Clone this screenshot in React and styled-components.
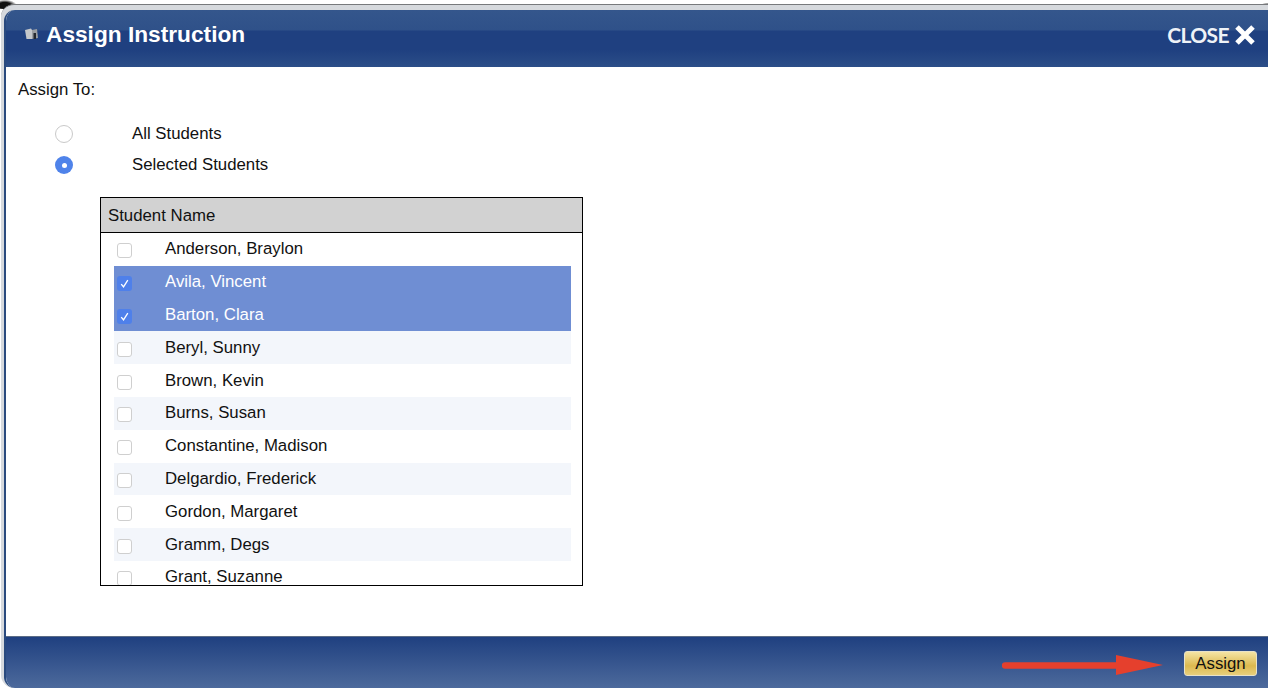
import React from "react";
import styled, { createGlobalStyle } from 'styled-components';

const students = [
  { name: 'Anderson, Braylon' },
  { name: 'Avila, Vincent', checked: true },
  { name: 'Barton, Clara', checked: true },
  { name: 'Beryl, Sunny' },
  { name: 'Brown, Kevin' },
  { name: 'Burns, Susan' },
  { name: 'Constantine, Madison' },
  { name: 'Delgardio, Frederick' },
  { name: 'Gordon, Margaret' },
  { name: 'Gramm, Degs' },
  { name: 'Grant, Suzanne' },
];

function App() {
  return (
    <Page>
      <GlobalStyle />
      <Frame>
        <Dialog>
          <Header>
            <Title>
              <svg width="13" height="12" viewBox="0 0 13 12">
                <path d="M0 2 L6 0.5 L7 2 L7 11 L1.5 11 Z" fill="#c4c7cb" />
                <path d="M7 2 L12 1 L13 10 L7 11 Z" fill="#9a9da1" />
                <path d="M8.5 5 h2.5 v6 h-2.5 Z" fill="#23272e" />
              </svg>
              <h1>Assign Instruction</h1>
            </Title>
            <Close>
              CLOSE
              <svg width="20" height="20" viewBox="0 0 20 20">
                <path d="M2 2 L18 18 M18 2 L2 18" stroke="#fff" strokeWidth="5" />
              </svg>
            </Close>
          </Header>

          <Body>
            <AssignLabel>Assign To:</AssignLabel>
            <RadioGroup>
              <RadioRow>
                <Radio />
                <span>All Students</span>
              </RadioRow>
              <RadioRow>
                <Radio $on />
                <span>Selected Students</span>
              </RadioRow>
            </RadioGroup>

            <Table>
              <TableHead>Student Name</TableHead>
              <List>
                {students.map((s, i) => (
                  <Row key={s.name} $checked={s.checked} $odd={i % 2 === 1}>
                    <Check $checked={s.checked}>
                      {s.checked && (
                        <svg viewBox="0 0 10 10">
                          <path d="M2 5.6 L4.1 8 L8 2" fill="none" stroke="#fff" strokeWidth="1.2" />
                        </svg>
                      )}
                    </Check>
                    <span>{s.name}</span>
                  </Row>
                ))}
              </List>
            </Table>
          </Body>

          <Footer>
            <Arrow width="162" height="22" viewBox="0 0 162 22">
              <path d="M3 11.5 H115" stroke="#e5402d" strokeWidth="6.5" strokeLinecap="round" />
              <path d="M114 1 L161 11 L114 21 Z" fill="#e5402d" />
            </Arrow>
            <AssignButton>Assign</AssignButton>
          </Footer>
        </Dialog>
      </Frame>
    </Page>
  )
}

export default App;

const GlobalStyle = createGlobalStyle`
  html, body {
    margin: 0;
    padding: 0;
    background: #fff;
  }
`

const Page = styled.div`
  width: 1268px;
  height: 688px;
  overflow: hidden;
  position: relative;
  display: flex;
  flex-direction: column;
  font-family: "Liberation Sans", Arial, sans-serif;
  color: #111;

  /* dark bits of the desktop showing round the window corners */
  &::before {
    content: '';
    position: absolute;
    left: 0;
    top: 0;
    width: 16px;
    height: 9px;
    background: radial-gradient(ellipse at 30% 60%, #111 40%, rgba(17, 17, 17, 0) 75%);
  }

  &::after {
    content: '';
    position: absolute;
    right: 0;
    top: 3px;
    width: 7px;
    height: 5px;
    background: radial-gradient(ellipse at 100% 50%, #333 30%, rgba(51, 51, 51, 0) 80%);
  }
`

const Frame = styled.div`
  flex: 1;
  min-height: 0;
  margin: 4px 0 0 1px;
  padding: 5px 0 0 3px;
  position: relative;
  z-index: 1;
  display: flex;
  background: #d6d9dd;
  border-top: 1px solid #77797c;
  border-radius: 13px 0 0 13px;
`

const Dialog = styled.div`
  flex: 1;
  min-width: 0;
  display: flex;
  flex-direction: column;
  background: #fff;
  border-left: 2px solid #2a4a7e;
  border-radius: 11px 0 0 11px;
  overflow: hidden;
`

const Header = styled.div`
  height: 57px;
  flex: none;
  padding: 0 13px 8px 19px;
  box-sizing: border-box;
  display: flex;
  align-items: center;
  justify-content: space-between;
  background: linear-gradient(#34568c 0, #2f5189 20px, #1f4080 21px, #1f4080 40px, #2c4e88 100%);
`

const Title = styled.div`
  display: flex;
  align-items: center;
  gap: 8px;

  & h1 {
    margin: 0;
    font-size: 22.7px;
    font-weight: 700;
    color: #fff;
    line-height: 1;
  }
`

const Close = styled.div`
  display: flex;
  align-items: center;
  gap: 6px;
  font-family: Lato, sans-serif;
  font-size: 21px;
  font-weight: 700;
  letter-spacing: -0.6px;
  line-height: 1;
  color: #eef2f7;
`

const Body = styled.div`
  flex: 1;
  min-height: 0;
  padding: 14px 0 0 12px;
  font-size: 16.8px;
`

const AssignLabel = styled.div`
  height: 18px;
  line-height: 18px;
`

const RadioGroup = styled.div`
  margin-top: 26px;
  margin-left: 37px;
  display: flex;
  flex-direction: column;
  gap: 13px;
`

const RadioRow = styled.div`
  height: 18px;
  line-height: 18px;
  display: flex;
  align-items: center;
  gap: 59px;
`

const Radio = styled.span`
  width: 18px;
  height: 18px;
  flex: none;
  box-sizing: border-box;
  border-radius: 50%;
  background: ${p => (p.$on ? '#4f83ea' : '#fff')};
  border: ${p => (p.$on ? 'none' : '1px solid #c9c9c9')};
  position: relative;

  &::after {
    content: '';
    display: ${p => (p.$on ? 'block' : 'none')};
    position: absolute;
    left: 6.5px;
    top: 6.5px;
    width: 5px;
    height: 5px;
    border-radius: 50%;
    background: #fff;
  }
`

const Table = styled.div`
  width: 483px;
  height: 389px;
  margin: 23px 0 0 82px;
  box-sizing: border-box;
  border: 1px solid #000;
  overflow: hidden;
`

const TableHead = styled.div`
  height: 35px;
  padding-left: 7px;
  box-sizing: border-box;
  line-height: 35px;
  background: #d2d2d2;
  border-bottom: 1px solid #000;
`

const List = styled.div`
  padding-left: 13px;
  width: 470px;
  box-sizing: border-box;
`

const Row = styled.div`
  width: 457px;
  height: 32.8px;
  display: flex;
  align-items: center;
  gap: 33px;
  padding-left: 3px;
  box-sizing: border-box;
  background: ${p => (p.$checked ? '#6f8ed3' : p.$odd ? '#f3f6fb' : '#fff')};
  color: ${p => (p.$checked ? '#fff' : '#111')};
`

const Check = styled.span`
  width: 15px;
  height: 15px;
  flex: none;
  margin-top: 3px;
  box-sizing: border-box;
  border-radius: 3px;
  display: flex;
  align-items: center;
  justify-content: center;
  background: ${p => (p.$checked ? '#4f80ea' : '#fff')};
  border: ${p => (p.$checked ? 'none' : '1px solid #cfcfcf')};

  & svg {
    width: 11px;
    height: 11px;
  }
`

const Footer = styled.div`
  height: 52px;
  flex: none;
  padding: 2px 11px 0 0;
  box-sizing: border-box;
  display: flex;
  align-items: center;
  justify-content: flex-end;
  border-top: 1px solid #5b6c86;
  background: linear-gradient(#1f4080, #4d6a9c);
`

const Arrow = styled.svg`
  margin-right: 20px;
  margin-top: 3px;
`

const AssignButton = styled.button`
  width: 73px;
  height: 25px;
  padding: 0;
  font-family: "Liberation Sans", Arial, sans-serif;
  font-size: 16.8px;
  color: #111;
  border: 1px solid #e8e2c8;
  border-radius: 3px;
  background: linear-gradient(#f4e4a4, #dcb94f 60%, #e8cf7c);
`
